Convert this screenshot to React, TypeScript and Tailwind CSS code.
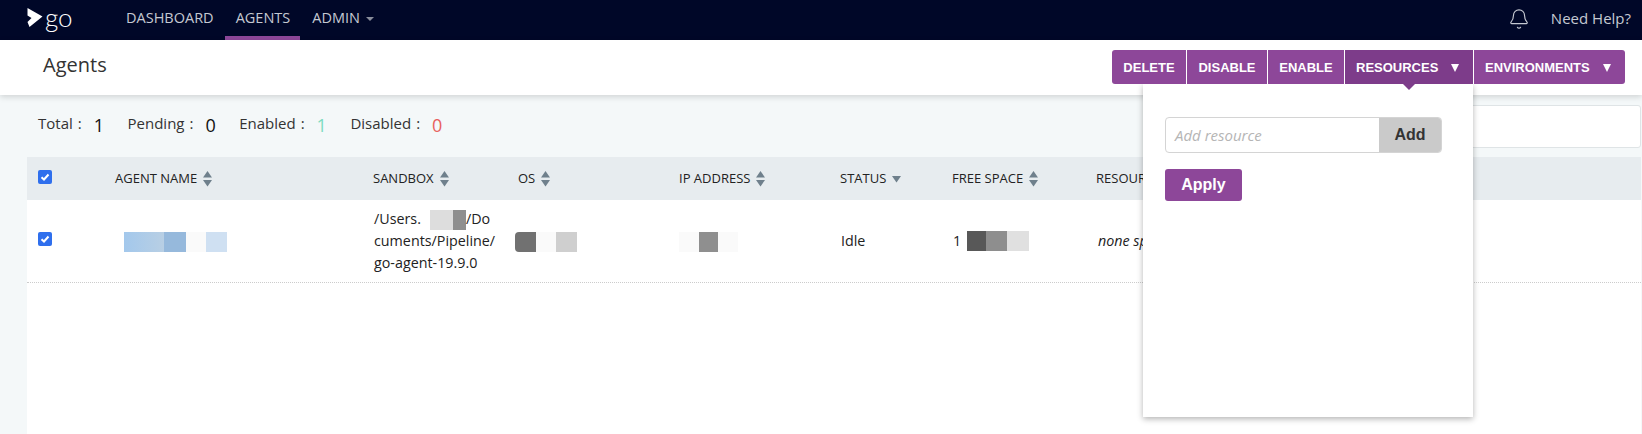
import { Bell } from 'lucide-react';

const columns = ['AGENT NAME', 'SANDBOX', 'OS', 'IP ADDRESS', 'STATUS', 'FREE SPACE', 'RESOURCES'];
const gridCols = 'grid grid-cols-[88px_258px_145px_161px_161px_112px_144px_1fr]';

function SortIcon({ down }: { down?: boolean }) {
  return (
    <svg width="11" height="16" viewBox="0 0 10 16" className="ml-[5px] shrink-0 fill-[#6f808c]">
      {!down && <path d="M5 0 9.500 6.500H.5z" />}
      <path d={down ? 'M.5 5h9L5 11.500z' : 'M.5 9h9L5 15.500z'} />
    </svg>
  );
}

function Check() {
  return (
    <span className="flex h-[14px] w-[14px] items-center justify-center rounded-[2px] bg-[#2f6fed]">
      <svg width="10" height="10" viewBox="0 0 10 10" fill="none" stroke="white" strokeWidth="2">
        <path d="M1.500 5.200 4 7.500 8.500 2.500" />
      </svg>
    </span>
  );
}

function Stat({ label, value, color }: { label: string; value: string; color: string }) {
  return (
    <div className="flex items-center">
      <span className="text-[15px] text-[#333]">{label}<span className="ml-[5px]">:</span></span>
      <span className={`ml-[12px] mt-1 text-[18px] ${color}`}>{value}</span>
    </div>
  );
}

export default function App() {
  return (
    <div className="h-[434px] w-[1642px] overflow-hidden bg-[#f4f8f9] font-['Open_Sans',sans-serif]">
      {/* Top nav */}
      <header className="flex h-10 items-center bg-[#000728] text-[14.500px] text-[#c5c9d2]">
        <div className="ml-[27px] flex w-[87px] items-center text-white">
          <svg width="16" height="21" viewBox="0 0 16 20" className="mb-[5px] fill-white">
            <path d="M.5.5 15.500 9 2.500 19.500.5 14.500 4.500 10.500.5 8z" />
          </svg>
          <span className="ml-[2px] mb-[7px] font-['Lato',sans-serif] text-[26px] font-light leading-none">go</span>
        </div>
        <nav className="flex h-full items-stretch">
          <a className="flex items-center pb-1 pl-3 pr-[11px]">DASHBOARD</a>
          <a className="flex items-center border-b-[4px] border-[#8d4799] pl-[11px] pr-[10px]">AGENTS</a>
          <a className="flex items-center px-3 pb-1">
            ADMIN
            <span className="ml-[6px] mt-[1px] border-x-[4px] border-t-[4px] border-x-transparent border-t-[#8a8e9c]" />
          </a>
        </nav>
        <div className="ml-auto flex items-center pb-1">
          <Bell className="mr-[21px] mt-[2px] h-[22px] w-[22px]" strokeWidth={1.25} />
          <span className="mr-[11px] text-[15px]">Need Help?</span>
        </div>
      </header>

      {/* Page title and actions */}
      <div className="relative z-10 flex h-[55px] items-start justify-between bg-white pl-[43px] pr-[17px] shadow-[0_2px_6px_rgba(0,0,0,0.15)]">
        <h1 className="mt-[10px] text-[20px] text-[#333]">Agents</h1>
        <div className="relative mt-[10px] flex h-[34px] items-stretch rounded-[3px] bg-[#8d4799] font-['Liberation_Sans',sans-serif] text-[13px] font-bold text-white">
          <button className="w-[74px] rounded-l-[3px] pt-px">DELETE</button>
          <button className="w-[81px] border-l border-white pt-px">DISABLE</button>
          <button className="w-[77px] border-l border-white pt-px">ENABLE</button>
          <button className="relative flex w-[129px] items-center border-l border-white bg-[#7d3c8a] pl-[11px] pt-px">
            RESOURCES
            <span className="ml-[13px] border-x-[4.500px] border-t-[8px] border-x-transparent border-t-white" />
            <span className="absolute bottom-[-6px] left-1/2 -ml-[6px] border-x-[6px] border-t-[6px] border-x-transparent border-t-[#7d3c8a]" />
          </button>
          <button className="flex w-[152px] items-center rounded-r-[3px] border-l border-white pl-[11px] pt-px">
            ENVIRONMENTS
            <span className="ml-[13px] border-x-[4.500px] border-t-[8px] border-x-transparent border-t-white" />
          </button>

          {/* Resources popover */}
          <div className="absolute left-[31px] top-[34px] -z-10 h-[333px] w-[330px] bg-white px-[22px] pt-[33px] font-['Open_Sans',sans-serif] shadow-[0_2px_6px_rgba(0,0,0,0.3)]">
            <div className="flex h-[36px] w-[277px] overflow-hidden rounded-[4px] border border-[#d4d4d4]">
              <span className="flex flex-1 items-center pl-[9px] text-[15px] font-normal italic text-[#b5b5b5]">Add resource</span>
              <span className="flex w-[62px] items-center justify-center bg-[#cacaca] pb-[1px] font-['Liberation_Sans',sans-serif] text-[16px] text-[#333]">Add</span>
            </div>
            <button className="mt-[16px] h-[32px] w-[77px] rounded-[3px] bg-[#8d4799] font-['Liberation_Sans',sans-serif] text-[16px] font-bold">Apply</button>
          </div>
        </div>
      </div>

      {/* Stats and search */}
      <div className="flex h-[62px] items-center justify-between pl-[38px] pr-[1px]">
        <div className="-mt-[6px] flex gap-[23.500px]">
          <Stat label="Total" value="1" color="text-[#111]" />
          <Stat label="Pending" value="0" color="text-[#111]" />
          <Stat label="Enabled" value="1" color="text-[#7ddcc0]" />
          <Stat label="Disabled" value="0" color="text-[#e8615d]" />
        </div>
        <div className="h-[43px] w-[400px] rounded-[3px] border border-[#dfe4e6] bg-white" />
      </div>

      {/* Agents table */}
      <div className="ml-[27px] mr-[1px] h-[280px] bg-white text-[13px] text-[#222]">
        <div className={`${gridCols} h-[43px] items-center bg-[#e7ecef]`}>
          <div className="-mt-1 pl-[11px]"><Check /></div>
          {columns.map((c) => (
            <div key={c} className="flex items-center whitespace-nowrap">
              {c}
              <SortIcon down={c === 'STATUS'} />
            </div>
          ))}
        </div>
        <div className={`${gridCols} h-[83px] items-center border-b border-dotted border-[#ccc] pt-[5px] text-[14.300px]`}>
          <div className="-mt-1 pl-[11px]"><Check /></div>
          <div className="ml-[9px] mt-[2px] flex">
            <span className="h-[20px] w-[40px] bg-gradient-to-r from-[#a3c8ec] to-[#b8cfe4]" />
            <span className="h-[20px] w-[22px] bg-[#96b9dc]" />
            <span className="h-[20px] w-[20px] bg-[#fafafa]" />
            <span className="h-[20px] w-[21px] bg-[#cfe0f2]" />
          </div>
          <div className="whitespace-nowrap pl-px leading-[22px]">
            /Users.
            <span className="inline-block h-[20px] w-[45px] bg-[linear-gradient(90deg,#fff_20%,#ddd_20%_70%,#8f8f8f_70%)] align-middle" />
            /Do
            <br />
            cuments/Pipeline/
            <br />
            go-agent-19.9.0
          </div>
          <div className="-ml-[3px] mt-[2px] flex">
            <span className="h-[20px] w-[21px] rounded-l-[4px] bg-[#717171]" />
            <span className="h-[20px] w-[20px] bg-[#fafafa]" />
            <span className="h-[20px] w-[21px] bg-[#cfcfcf]" />
          </div>
          <div className="mt-[2px] flex">
            <span className="h-[20px] w-[20px] bg-[#fafafa]" />
            <span className="h-[20px] w-[19px] bg-[#8f8f8f]" />
            <span className="h-[20px] w-[20px] bg-[#fafafa]" />
          </div>
          <div className="pl-px">Idle</div>
          <div className="flex items-center pl-px">
            1<span className="ml-[6px] h-[20px] w-[19px] bg-[#585858]" />
            <span className="h-[20px] w-[21px] bg-[#8e8e8e]" />
            <span className="h-[20px] w-[22px] bg-[#e0e0e0]" />
          </div>
          <div className="whitespace-nowrap pl-[2px] italic">none specified</div>
          <div />
        </div>
      </div>
    </div>
  );
}
